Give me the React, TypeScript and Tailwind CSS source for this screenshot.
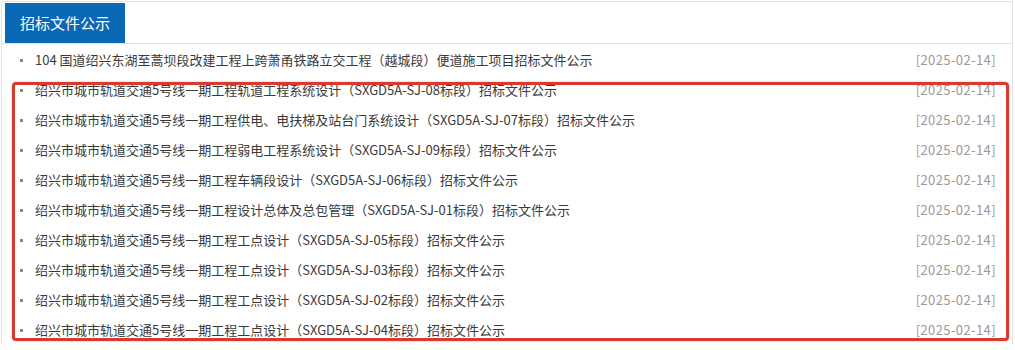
const items = [
  "104 国道绍兴东湖至蒿坝段改建工程上跨萧甬铁路立交工程（越城段）便道施工项目招标文件公示",
  "绍兴市城市轨道交通5号线一期工程轨道工程系统设计（SXGD5A-SJ-08标段）招标文件公示",
  "绍兴市城市轨道交通5号线一期工程供电、电扶梯及站台门系统设计（SXGD5A-SJ-07标段）招标文件公示",
  "绍兴市城市轨道交通5号线一期工程弱电工程系统设计（SXGD5A-SJ-09标段）招标文件公示",
  "绍兴市城市轨道交通5号线一期工程车辆段设计（SXGD5A-SJ-06标段）招标文件公示",
  "绍兴市城市轨道交通5号线一期工程设计总体及总包管理（SXGD5A-SJ-01标段）招标文件公示",
  "绍兴市城市轨道交通5号线一期工程工点设计（SXGD5A-SJ-05标段）招标文件公示",
  "绍兴市城市轨道交通5号线一期工程工点设计（SXGD5A-SJ-03标段）招标文件公示",
  "绍兴市城市轨道交通5号线一期工程工点设计（SXGD5A-SJ-02标段）招标文件公示",
  "绍兴市城市轨道交通5号线一期工程工点设计（SXGD5A-SJ-04标段）招标文件公示",
]

export default function App() {
  return (
    <div
      className="relative w-[1015px] h-[350px] bg-white overflow-hidden"
      style={{ fontFamily: '"Noto Sans CJK SC", "Noto Sans", sans-serif' }}
    >
      <div className="ml-[1px] mt-[1px] w-[1012px] border border-[#e3e3e3] border-b-0">
        {/* Header tab */}
        <div className="flex pl-[3px] pt-[1px] border-b border-[#e3e3e3]">
          <div className="h-[40px] px-[15px] flex items-center bg-[#0a68b4] text-white text-[15px]">
            招标文件公示
          </div>
        </div>

        {/* List */}
        <ul className="pt-[1px]">
          {items.map((title, i) => (
            <li key={i} className="h-[30px] flex items-center pl-[18px] pr-[16px] text-[13px]">
              <span className="w-[3px] h-[3px] bg-[#888] mr-[12px] shrink-0" />
              <span className="text-[#3a3a3a] truncate">{title}</span>
              <span className="ml-auto text-[#999] tracking-[0.4px] shrink-0">[2025-02-14]</span>
            </li>
          ))}
        </ul>
      </div>

      {/* Red annotation box */}
      <div className="absolute left-[12px] top-[82px] w-[997px] h-[259px] border-[3px] border-[#d63a30] rounded-[4px] shadow-[0_0_2px_rgba(214,58,48,0.5)] pointer-events-none" />
    </div>
  )
}
